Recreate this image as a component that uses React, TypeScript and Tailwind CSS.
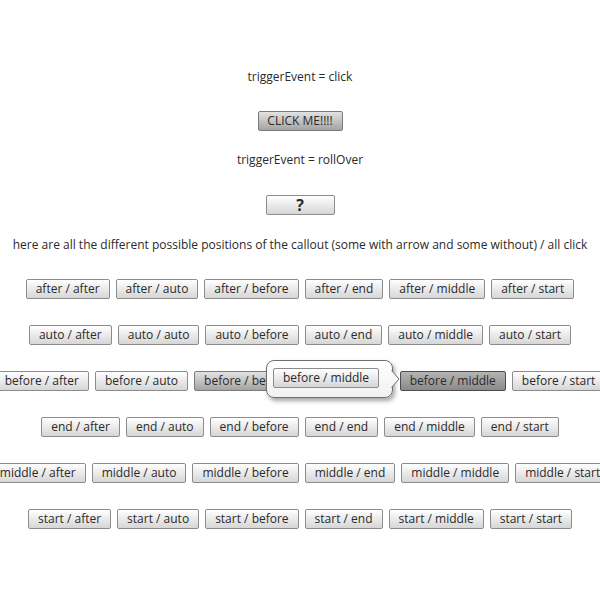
import type { ReactNode } from 'react';

type Variant = 'normal' | 'down' | 'selected';

function Btn({ children, variant = 'normal', className = '' }: { children: ReactNode; variant?: Variant; className?: string }) {
  const skin =
    variant === 'selected'
      ? 'border-[#4d4d4d] from-[#b4b4b4] to-[#8a8a8a]'
      : variant === 'down'
        ? 'border-[#7a7a7a] from-[#e2e2e2] to-[#a4a4a4]'
        : 'border-[#8c8c8c] from-white to-[#d6d6d6]';
  return (
    <button
      className={`inline-flex h-5 shrink-0 items-center justify-center whitespace-nowrap rounded-[2px] border bg-linear-to-b px-[9px] text-[12px] leading-none text-[#2a2a2a] ${skin} ${className}`}
    >
      {children}
    </button>
  );
}

const second = ['after', 'auto', 'before', 'end', 'middle', 'start'];

function Row({ first }: { first: string }) {
  return (
    <div className="flex h-5 w-full justify-center gap-[6px]">
      {second.map((s) => (
        <Btn key={s}>
          {first} / {s}
        </Btn>
      ))}
    </div>
  );
}

export default function App() {
  return (
    <div
      className="relative flex h-[600px] w-[600px] flex-col items-center overflow-hidden bg-white text-[12px] text-[#2a2a2a]"
      style={{ fontFamily: '"Open Sans", "Liberation Sans", sans-serif' }}
    >
      <p className="mt-[69px] h-4 leading-4">triggerEvent = click</p>
      <Btn variant="down" className="mt-[26px] w-[85px] px-0">
        CLICK ME!!!!
      </Btn>
      <p className="mt-[21px] h-4 leading-4">triggerEvent = rollOver</p>
      <Btn className="mt-[27px] w-[69px] px-0 text-[16px] font-bold">?</Btn>
      <p className="mt-[22px] h-4 leading-4">
        here are all the different possible positions of the callout (some with arrow and some without) / all click
      </p>

      <div className="mt-[26px] flex w-full flex-col gap-[26px]">
        <Row first="after" />
        <Row first="auto" />
        <div className="flex h-5 w-full justify-center gap-[6px]">
          <Btn>before / after</Btn>
          <Btn>before / auto</Btn>
          <Btn variant="down">before / before</Btn>
          <div className="w-[89px] shrink-0" />
          <Btn variant="selected">before / middle</Btn>
          <Btn>before / start</Btn>
        </div>
        <Row first="end" />
        <Row first="middle" />
        <Row first="start" />
      </div>

      {/* callout, opened before the selected button */}
      <div className="absolute left-[266px] top-[360px] h-[38px] w-[134px]">
        <div className="absolute inset-y-0 left-0 w-[127px] rounded-[8px] border border-[#6e6e6e] bg-linear-to-b from-white to-[#f1f1f1] shadow-[2px_3px_4px_rgba(0,0,0,0.35)]" />
        <svg className="absolute left-[125px] top-[10px]" width="9" height="18" viewBox="0 0 9 18">
          <path d="M0 0 L8 9 L0 18 Z" fill="#f8f8f8" />
          <path d="M0.5 0.5 L8 9 L0.5 17.5" fill="none" stroke="#6e6e6e" strokeWidth="1" />
        </svg>
        <div className="absolute left-[7px] top-[8px]">
          <Btn className="w-[106px] px-0">before / middle</Btn>
        </div>
      </div>
    </div>
  );
}
